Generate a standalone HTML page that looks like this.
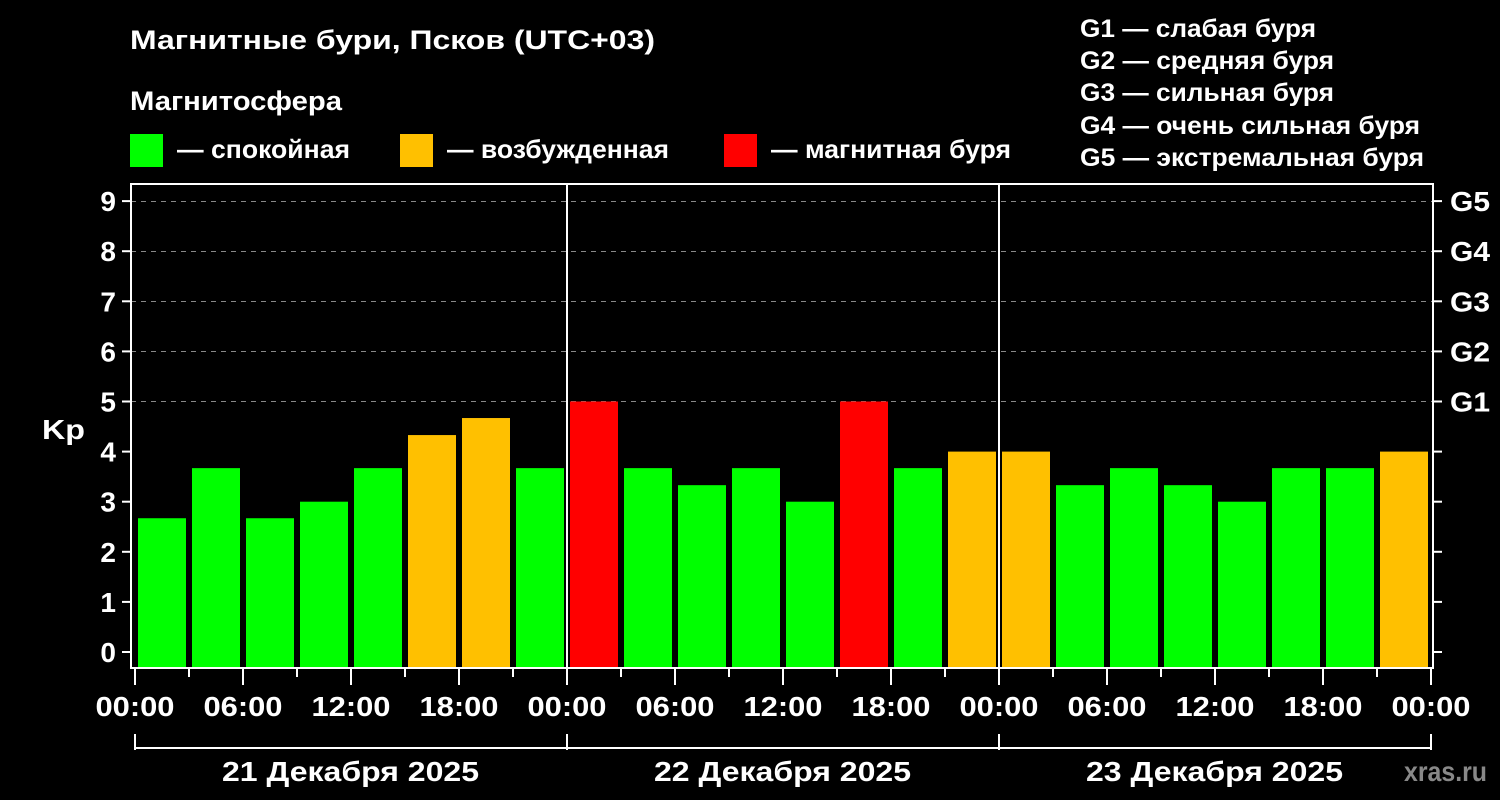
<!DOCTYPE html><html><head><meta charset="utf-8"><style>body{margin:0;background:#000;width:1500px;height:800px;overflow:hidden}svg{display:block}text{font-family:"Liberation Sans",sans-serif;font-weight:bold;fill:#fff}</style></head><body>
<svg width="1500" height="800" xmlns="http://www.w3.org/2000/svg">
<text x="130" y="49" font-size="27" textLength="525" lengthAdjust="spacingAndGlyphs">Магнитные бури, Псков (UTC+03)</text>
<text x="130" y="110" font-size="27" textLength="212" lengthAdjust="spacingAndGlyphs">Магнитосфера</text>
<rect x="130" y="134" width="33" height="33" fill="#00ff00"/><text x="177" y="158" font-size="26" textLength="173" lengthAdjust="spacingAndGlyphs">— спокойная</text>
<rect x="400" y="134" width="33" height="33" fill="#ffc000"/><text x="447" y="158" font-size="26" textLength="222" lengthAdjust="spacingAndGlyphs">— возбужденная</text>
<rect x="724" y="134" width="33" height="33" fill="#ff0000"/><text x="771" y="158" font-size="26" textLength="240" lengthAdjust="spacingAndGlyphs">— магнитная буря</text>
<g font-size="25"><text x="1080" y="37" textLength="236" lengthAdjust="spacingAndGlyphs">G1 — слабая буря</text><text x="1080" y="69" textLength="254" lengthAdjust="spacingAndGlyphs">G2 — средняя буря</text><text x="1080" y="101" textLength="254" lengthAdjust="spacingAndGlyphs">G3 — сильная буря</text><text x="1080" y="134" textLength="340" lengthAdjust="spacingAndGlyphs">G4 — очень сильная буря</text><text x="1080" y="166" textLength="344" lengthAdjust="spacingAndGlyphs">G5 — экстремальная буря</text></g>
<g id="grid" stroke="#888" stroke-dasharray="5,5" stroke-width="1">
<line x1="131" x2="1433" y1="201.5" y2="201.5"/><line x1="131" x2="1433" y1="251.5" y2="251.5"/><line x1="131" x2="1433" y1="301.5" y2="301.5"/><line x1="131" x2="1433" y1="351.5" y2="351.5"/><line x1="131" x2="1433" y1="401.5" y2="401.5"/></g>
<g id="bars"></g>
<line x1="567" x2="567" y1="183" y2="668" stroke="#fff" stroke-width="2"/>
<line x1="999" x2="999" y1="183" y2="668" stroke="#fff" stroke-width="2"/>
<rect x="131" y="184" width="1302" height="484" fill="none" stroke="#fff" stroke-width="2"/>
<g id="ticks" stroke="#fff" stroke-width="2"></g>
<g id="lbl" font-size="28"></g>
<text x="42" y="439" font-size="28" textLength="43" lengthAdjust="spacingAndGlyphs">Kp</text>
<line x1="135" x2="1431" y1="748" y2="748" stroke="#fff" stroke-width="2"/>
<g stroke="#fff" stroke-width="2"><line x1="135" x2="135" y1="734" y2="750"/><line x1="567" x2="567" y1="734" y2="750"/><line x1="999" x2="999" y1="734" y2="750"/><line x1="1431" x2="1431" y1="734" y2="750"/></g>
<g font-size="28"><text x="222" y="781" textLength="257" lengthAdjust="spacingAndGlyphs">21 Декабря 2025</text><text x="654" y="781" textLength="257" lengthAdjust="spacingAndGlyphs">22 Декабря 2025</text><text x="1086" y="781" textLength="257" lengthAdjust="spacingAndGlyphs">23 Декабря 2025</text></g>
<text x="1404" y="781" font-size="28" textLength="83" lengthAdjust="spacingAndGlyphs" style="fill:#888">xras.ru</text>
</svg>
<script>
const ns="http://www.w3.org/2000/svg";
const v=[2.67,3.67,2.67,3,3.67,4.33,4.67,3.67,5,3.67,3.33,3.67,3,5,3.67,4,4,3.33,3.67,3.33,3,3.67,3.67,4];
const b=document.getElementById('bars');
v.forEach((k,i)=>{const r=document.createElementNS(ns,'rect');const y=652-50.1*k;r.setAttribute('x',138+54*i);r.setAttribute('y',y);r.setAttribute('width',48);r.setAttribute('height',668-y);r.setAttribute('fill',k>=5?'#ff0000':k>=4?'#ffc000':'#00ff00');b.appendChild(r)});
const t=document.getElementById('ticks'),l=document.getElementById('lbl');
function ln(x1,y1,x2,y2){const e=document.createElementNS(ns,'line');e.setAttribute('x1',x1);e.setAttribute('y1',y1);e.setAttribute('x2',x2);e.setAttribute('y2',y2);t.appendChild(e)}
function tx(x,y,s,a,w){const e=document.createElementNS(ns,'text');e.setAttribute('x',x);e.setAttribute('y',y);if(a)e.setAttribute('text-anchor',a);if(w){e.setAttribute('textLength',w);e.setAttribute('lengthAdjust','spacingAndGlyphs')}e.textContent=s;l.appendChild(e)}
for(let k=0;k<=9;k++){const y=652-50.1*k;ln(122,y,131,y);ln(1433,y,1442,y);tx(116,y+10,k,'end')}
['G1','G2','G3','G4','G5'].forEach((g,i)=>tx(1450,652-50.1*(5+i)+10,g,null,40));
const hl=['00:00','06:00','12:00','18:00'];
for(let i=0;i<=24;i++){const x=135+54*i;if(i%2==0){ln(x,668,x,685);tx(x-39.5,716,hl[(i/2)%4],null,79)}else ln(x,668,x,677)}
</script></body></html>
